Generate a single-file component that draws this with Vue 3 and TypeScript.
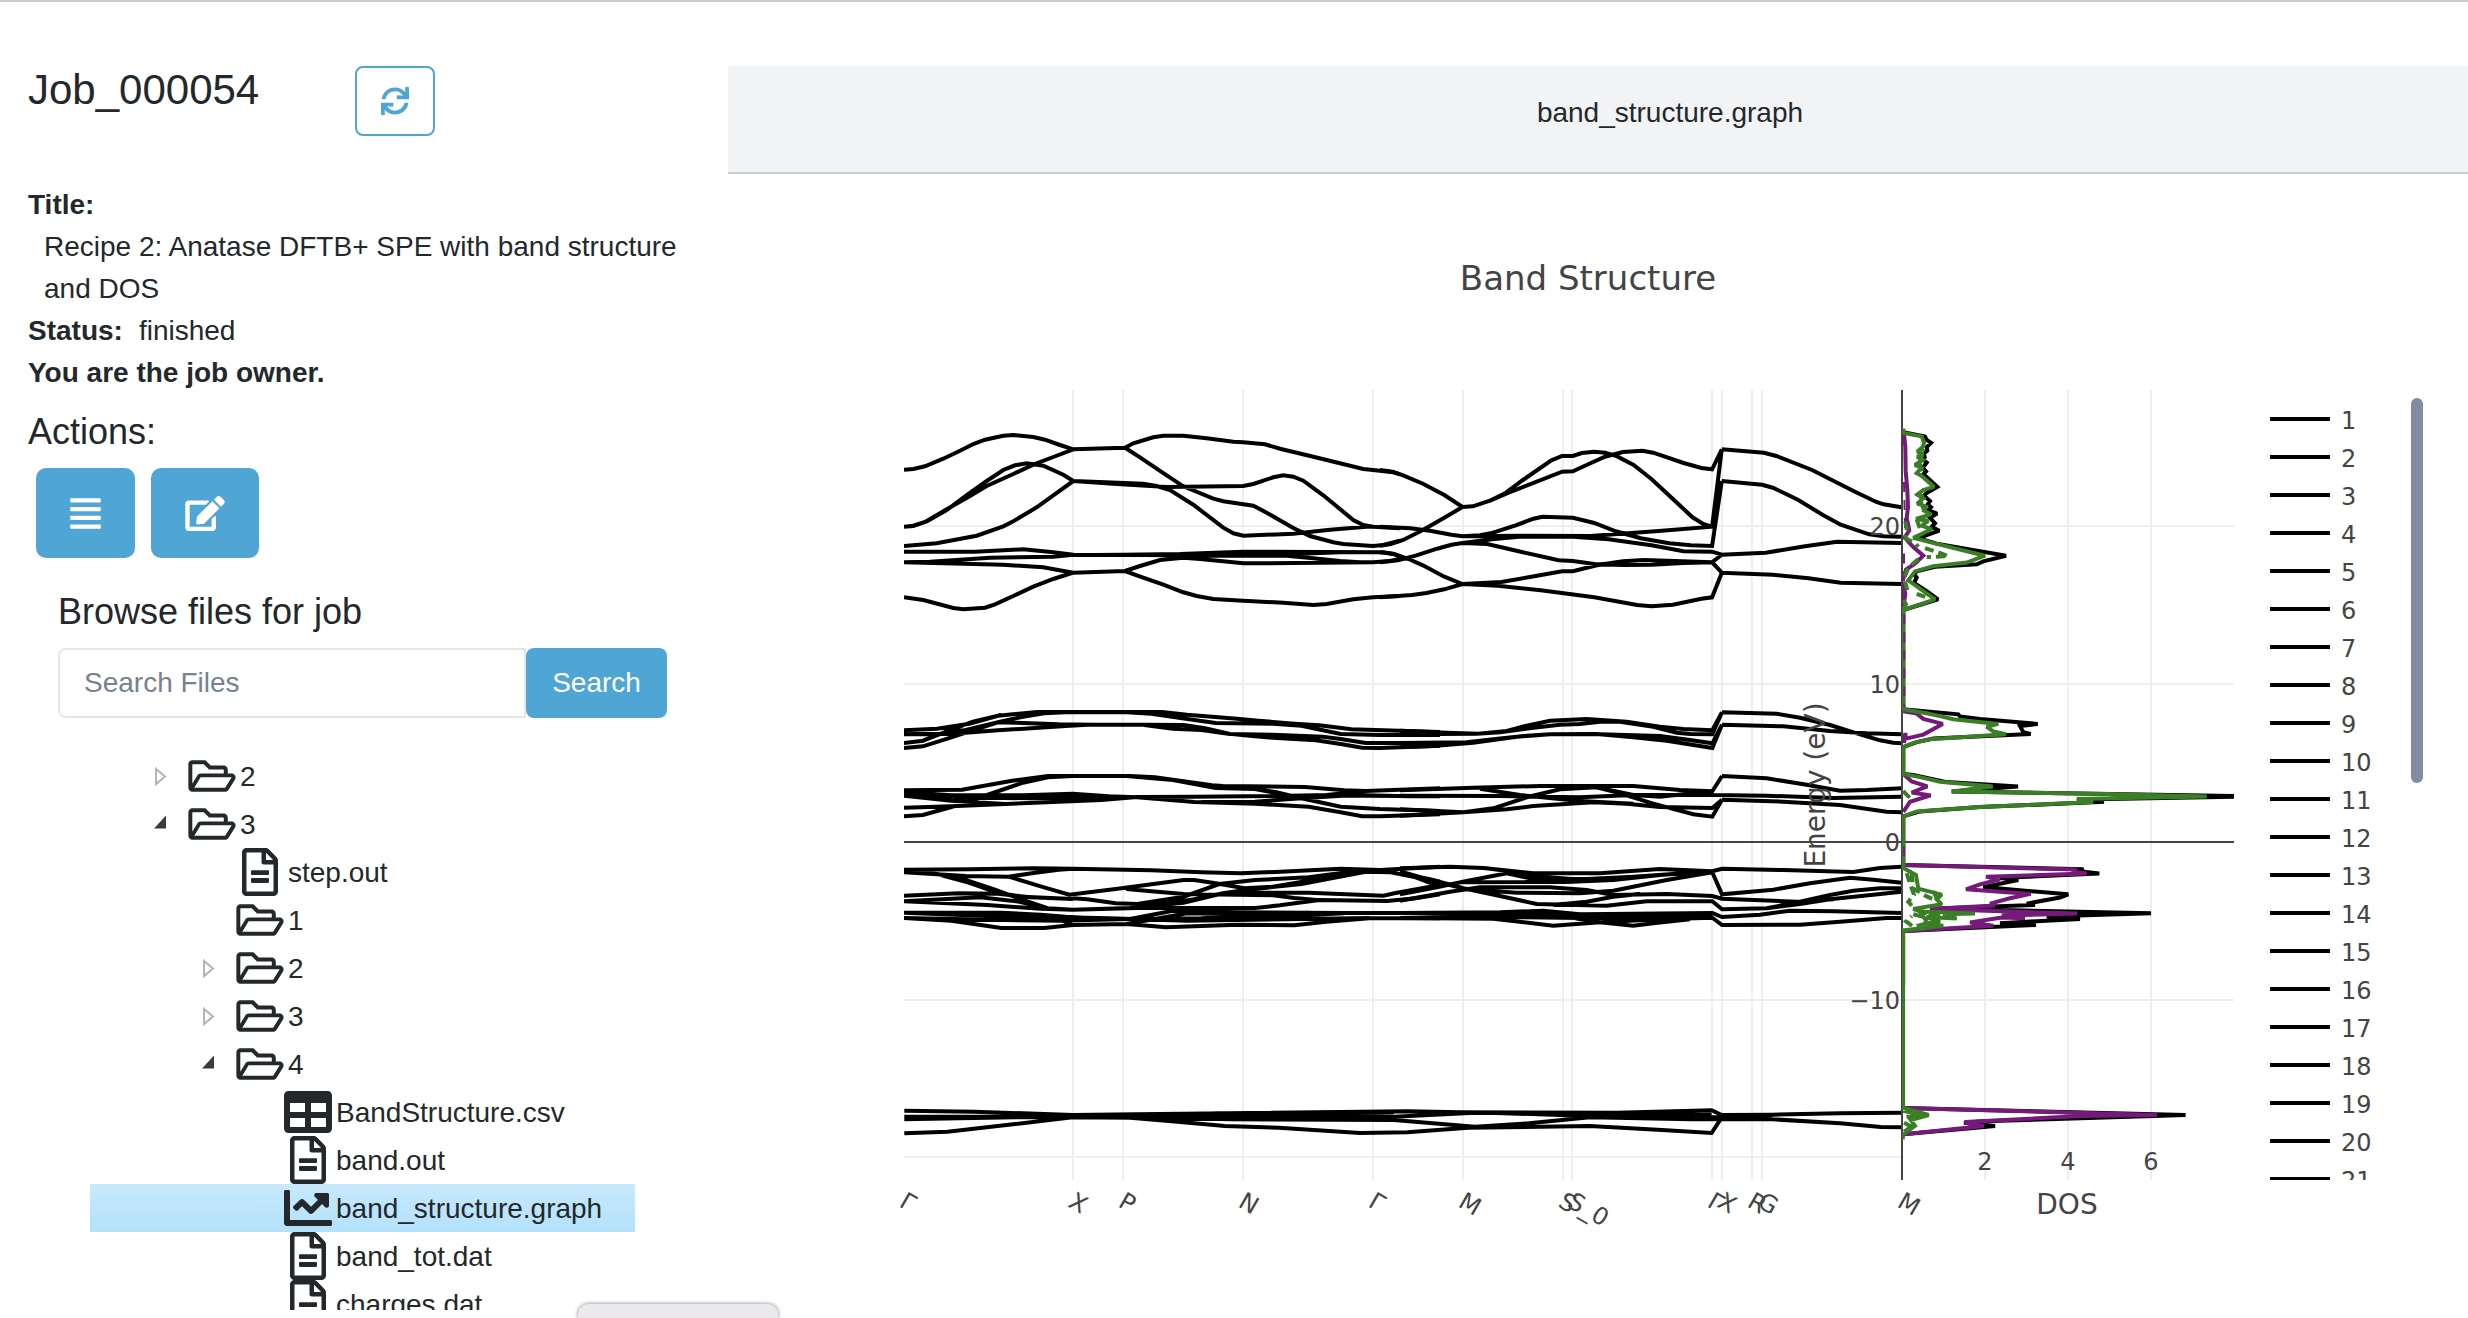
<script setup lang="ts">
import { computed, ref } from 'vue'

type IconName = 'sync' | 'list' | 'edit' | 'folder' | 'file' | 'table' | 'chart'
interface Icon { box: string; d: string }
interface TreeNode { id: number; label: string; level: number; icon: IconName; expander?: 'open' | 'closed' }
interface Tile { x: number; y: number; sx: number; sy: number; lines: string[] }

const icons: Record<IconName, Icon> = {
  sync: { box: '0 0 512 512', d: 'M440.65 12.57l4 82.77A247.16 247.16 0 0 0 255.83 8C134.73 8 33.91 94.92 12.29 209.82A12 12 0 0 0 24.09 224h49.05a12 12 0 0 0 11.67-9.26 175.91 175.91 0 0 1 317-56.94l-101.46-4.86a12 12 0 0 0-12.57 12v47.41a12 12 0 0 0 12 12H500a12 12 0 0 0 12-12V12a12 12 0 0 0-12-12h-47.37a12 12 0 0 0-11.98 12.57zM255.83 432a175.61 175.61 0 0 1-146-77.8l101.8 4.87a12 12 0 0 0 12.57-12v-47.4a12 12 0 0 0-12-12H12a12 12 0 0 0-12 12V500a12 12 0 0 0 12 12h47.35a12 12 0 0 0 12-12.6l-4.15-82.57A247.17 247.17 0 0 0 255.83 504c121.11 0 221.93-86.92 243.55-201.82a12 12 0 0 0-11.8-14.18h-49.05a12 12 0 0 0-11.67 9.26A175.86 175.86 0 0 1 255.83 432z' },
  list: { box: '0 0 448 512', d: 'M432 416H16a16 16 0 0 0-16 16v32a16 16 0 0 0 16 16h416a16 16 0 0 0 16-16v-32a16 16 0 0 0-16-16zm0-128H16a16 16 0 0 0-16 16v32a16 16 0 0 0 16 16h416a16 16 0 0 0 16-16v-32a16 16 0 0 0-16-16zm0-128H16a16 16 0 0 0-16 16v32a16 16 0 0 0 16 16h416a16 16 0 0 0 16-16v-32a16 16 0 0 0-16-16zm0-128H16A16 16 0 0 0 0 48v32a16 16 0 0 0 16 16h416a16 16 0 0 0 16-16V48a16 16 0 0 0-16-16z' },
  edit: { box: '0 0 576 512', d: 'M402.6 83.2l90.2 90.2c3.8 3.8 3.8 10 0 13.8L274.4 405.6l-92.8 10.3c-12.4 1.4-22.9-9.1-21.5-21.5l10.3-92.8L388.8 83.2c3.8-3.8 10-3.8 13.8 0zm162-22.9l-48.8-48.8c-15.2-15.2-39.9-15.2-55.2 0l-35.4 35.4c-3.8 3.8-3.8 10 0 13.8l90.2 90.2c3.8 3.8 10 3.8 13.8 0l35.4-35.4c15.2-15.3 15.2-40 0-55.2zM384 346.2V448H64V128h229.8c3.2 0 6.2-1.3 8.5-3.5l40-40c7.6-7.6 2.2-20.5-8.5-20.5H48C21.5 64 0 85.5 0 112v352c0 26.5 21.5 48 48 48h352c26.5 0 48-21.5 48-48V306.2c0-10.7-12.9-16-20.5-8.5l-40 40c-2.2 2.3-3.5 5.3-3.5 8.5z' },
  folder: { box: '0 0 576 512', d: 'M527.9 224H480v-48c0-26.5-21.5-48-48-48H272l-64-64H48C21.5 64 0 85.5 0 112v288c0 26.5 21.5 48 48 48h400c16.5 0 31.9-8.5 40.7-22.6l79.9-128c20-31.9-3-73.4-40.7-73.4zM48 118c0-3.3 2.7-6 6-6h134.1l64 64H426c3.3 0 6 2.7 6 6v42H152c-16.8 0-32.4 8.8-41.1 23.2L48 351.4zm400 282H72l77.2-128H528z' },
  file: { box: '0 0 384 512', d: 'M288 248v28c0 6.6-5.4 12-12 12H108c-6.6 0-12-5.4-12-12v-28c0-6.6 5.4-12 12-12h168c6.6 0 12 5.4 12 12zm-12 72H108c-6.6 0-12 5.4-12 12v28c0 6.6 5.4 12 12 12h168c6.6 0 12-5.4 12-12v-28c0-6.6-5.4-12-12-12zm108-188.1V464c0 26.5-21.5 48-48 48H48c-26.5 0-48-21.5-48-48V48C0 21.5 21.5 0 48 0h204.1C264.8 0 277 5.1 286 14.1L369.9 98c9 8.9 14.1 21.2 14.1 33.9zm-128-80V128h76.1L256 51.9zM336 464V176H232c-13.3 0-24-10.7-24-24V48H48v416h288z' },
  table: { box: '0 0 512 512', d: 'M464 32H48C21.49 32 0 53.49 0 80v352c0 26.51 21.49 48 48 48h416c26.51 0 48-21.49 48-48V80c0-26.51-21.49-48-48-48zM224 416H64v-96h160v96zm0-160H64v-96h160v96zm224 160H288v-96h160v96zm0-160H288v-96h160v96z' },
  chart: { box: '0 0 512 512', d: 'M496 384H64V80c0-8.84-7.16-16-16-16H16C7.16 64 0 71.16 0 80v336c0 17.67 14.33 32 32 32h464c8.84 0 16-7.16 16-16v-32c0-8.84-7.16-16-16-16zM464 96H345.94c-21.38 0-32.09 25.85-16.97 40.97l32.4 32.4L288 242.75l-73.37-73.37c-12.5-12.5-32.76-12.5-45.25 0l-68.69 68.69c-6.25 6.25-6.25 16.38 0 22.63l22.62 22.62c6.25 6.25 16.38 6.25 22.63 0L192 237.25l73.37 73.37c12.5 12.5 32.76 12.5 45.25 0l96-96 32.4 32.4c15.12 15.12 40.97 4.41 40.97-16.97V112c.01-8.84-7.15-16-15.99-16z' }
}

const nodes: TreeNode[] = [
  { id: 1, label: '2', level: 1, icon: 'folder', expander: 'closed' },
  { id: 2, label: '3', level: 1, icon: 'folder', expander: 'open' },
  { id: 3, label: 'step.out', level: 2, icon: 'file' },
  { id: 4, label: '1', level: 2, icon: 'folder' },
  { id: 5, label: '2', level: 2, icon: 'folder', expander: 'closed' },
  { id: 6, label: '3', level: 2, icon: 'folder', expander: 'closed' },
  { id: 7, label: '4', level: 2, icon: 'folder', expander: 'open' },
  { id: 8, label: 'BandStructure.csv', level: 3, icon: 'table' },
  { id: 9, label: 'band.out', level: 3, icon: 'file' },
  { id: 10, label: 'band_structure.graph', level: 3, icon: 'chart' },
  { id: 11, label: 'band_tot.dat', level: 3, icon: 'file' },
  { id: 12, label: 'charges.dat', level: 3, icon: 'file' }
]
const selected = ref(10)
const query = ref('')
const selectedName = computed(() => nodes.find(n => n.id === selected.value)?.label ?? '')

const symmetryPoints = [
  { x: 904, label: 'Γ' }, { x: 1073, label: 'X' }, { x: 1123, label: 'P' }, { x: 1243, label: 'N' },
  { x: 1373, label: 'Γ' }, { x: 1463, label: 'M' }, { x: 1563, label: 'S' }, { x: 1572, label: 'S_0' },
  { x: 1712, label: 'Γ' }, { x: 1722, label: 'X' }, { x: 1752, label: 'R' }, { x: 1762, label: 'G' },
  { x: 1902, label: 'M' }
]
const gridX = symmetryPoints.slice(1, -1).map(p => p.x)
const energyTicks = [
  { y: 526, label: '20' }, { y: 684, label: '10' }, { y: 842, label: '0' }, { y: 1000, label: '−10' }
]
const dosTicks = [{ x: 1985, label: '2' }, { x: 2068, label: '4' }, { x: 2151, label: '6' }]
const legend = Array.from({ length: 21 }, (_, i) => ({ label: String(i + 1), y: 419 + i * 38 }))

// Each tile holds sampled curves relative to its own origin, in sub-pixel units.
function toPath(t: Tile): string {
  return t.lines.map(line => 'M' + line.split(' ').map(p => {
    const [x, y] = p.split(',').map(Number)
    return (t.x + x / t.sx).toFixed(1) + ' ' + (t.y + y / t.sy).toFixed(1)
  }).join('L')).join('')
}

const bandTiles: Tile[] = [
  { x: 880, y: 380, sx: 3, sy: 3, lines: [
    '72,269 100,267 135,259 190,236 240,212 280,192 315,179 370,167 400,165 460,171 495,179 540,195 580,208 735,203 760,190 820,172 850,167 910,167 980,175 1060,185 1090,187 1155,193 1200,206 1300,230 1450,267 1479,270 1540,277 1560,283',
    '72,440 100,437 135,426 200,388 270,348 320,318 400,282 460,254 520,231 580,208',
    '72,440 100,438 140,424 200,390 260,345 320,303 370,270 405,256 440,250 490,257 550,284 580,303 790,311 830,318 870,330 940,374 1030,443 1060,460 1090,467 1240,461 1350,449 1460,440 1479,440 1560,445',
    '580,303 700,311 860,321 1090,318 1120,312 1180,292 1210,286 1240,290 1270,302 1330,346 1420,420 1450,435 1479,440',
    '72,498 170,490 290,467 370,439 400,424 470,382 520,346 580,303',
    '735,203 780,232 860,286 910,319 1000,356 1030,364 1120,377 1160,398 1240,444 1290,468 1360,487 1390,492 1479,498 1510,495 1560,482',
    '72,515 285,515 430,508 520,517 580,524 640,525 730,524 900,522 1090,515 1510,517 1540,522 1560,530',
    '72,547 150,545 330,533 520,530 580,524',
    '72,547 370,554 490,562 530,569 580,578 735,573 780,558 840,540 910,533 960,537 1090,550 1240,549 1479,547 1530,543 1560,537',
    '72,652 130,660 220,684 250,688 315,683 345,673 400,648 460,620 520,597 580,578',
    '735,573 770,586 850,614 910,637 950,648 1000,657 1090,662 1210,668 1300,675 1340,672 1420,658 1479,652 1560,648',
    '730,524 1000,527 1220,527 1300,535 1380,543 1440,547 1479,547',
    '740,524 950,526 1240,522 1380,517'
  ] },
  { x: 1380, y: 380, sx: 2.8, sy: 3, lines: [
    '0,270 35,275 65,286 120,311 180,345 231,381 260,379 310,361 350,340 400,300 480,241 510,228 540,228 565,219 600,215 630,218 660,227 710,255 760,297 820,357 875,412 905,432 930,440 957,208',
    '310,361 360,338 510,275 540,274 580,254 630,230 680,216 735,212 765,218 850,249 900,264 930,268 957,208',
    '0,440 85,445 140,452 200,464 231,469 280,466 310,460 380,436 430,416 455,410 540,413 600,429 660,454 730,475 810,490 870,496 930,498 957,303',
    '0,497 30,492 65,480 120,450 180,413 231,381',
    '231,469 390,467 590,468 780,453 930,440 957,303',
    '231,489 320,477 390,470 540,470 640,478 760,496 850,514 930,515 957,524',
    '0,517 40,522 80,537 120,556 180,590 231,612',
    '0,547 50,541 100,527 160,506 200,494 231,489',
    '0,652 90,645 130,639 180,628 231,612 340,606 420,591 510,574 540,574 610,555 680,544 740,540 930,547',
    '231,489 300,492 340,502 400,517 500,541 540,543 600,552 680,555 760,554 850,549 930,547 957,578',
    '231,612 330,617 450,631 600,652 720,675 760,679 820,674 900,656 930,652 957,578 1100,584 1200,595 1290,608 1460,612',
    '957,208 1075,218 1110,228 1210,270 1330,335 1390,366 1410,373 1460,382',
    '957,303 1070,314 1100,323 1170,359 1240,405 1290,434 1370,463 1410,469 1460,470',
    '930,547 957,524 1080,518 1190,499 1280,485 1460,489'
  ] },
  { x: 880, y: 680, sx: 2.8, sy: 3, lines: [
    '67,151 160,146 250,131 330,107 440,96 560,96 790,96 860,104 1000,116 1060,122 1160,131 1230,136 1320,148 1568,156',
    '67,163 150,163 240,150 330,127 380,128 500,133 600,134',
    '67,189 120,182 180,157 260,125 340,105',
    '67,204 120,199 180,179 260,151 330,127 400,110 460,100 520,97 690,97 760,101 880,120 940,129 1100,131 1180,137 1290,162 1400,165 1568,165',
    '67,163 240,158 330,151 520,138 580,134 740,134 850,135 910,145 980,162 1100,164 1240,170 1290,177 1360,189 1568,189',
    '740,135 820,146 900,150 980,162 1100,173 1220,181 1290,192 1350,203 1400,204 1568,197',
    '67,331 230,329 370,302 470,288 700,288 770,292 930,316 960,318 1190,321 1300,331 1360,333 1568,325',
    '67,347 200,362 350,372 620,360 720,351 880,350 1180,347 1360,347 1568,349',
    '67,336 200,346 400,346 540,341 640,349 720,352',
    '67,340 220,352 420,355 620,352',
    '67,383 200,379 350,372 620,360',
    '67,409 120,405 180,387 230,372 300,345 400,308 470,292 540,288 690,288 820,300 940,324 1050,327 1110,337 1180,355 1290,380 1400,387 1568,393',
    '720,352 880,366 1050,371 1200,380 1290,397 1350,409 1400,409 1568,403',
    '900,366 1050,365 1200,353 1330,345 1480,349',
    '1050,327 1150,347 1250,345 1360,333',
    '67,569 250,568 430,565 540,566 760,571 900,577 1010,580 1150,574 1290,566 1400,570 1568,560',
    '67,577 160,582 240,605 330,638 400,650 540,657',
    '160,582 240,600 320,628 400,660 480,688',
    '67,577 240,588 360,590 430,579 500,569 540,566',
    '360,590 450,619 530,644 660,627 850,600 880,600 940,610 1020,625 1100,620 1200,602 1340,576',
    '540,655 580,658 660,670 720,672 850,650 950,612 1050,600 1200,592 1340,572',
    '67,647 220,640 330,641 420,652 540,657',
    '67,664 280,652 390,665 470,685 540,689 720,684 880,658 960,640 1060,638 1200,638 1410,647 1440,640 1568,615',
    '67,664 300,675 450,686 540,689 700,684 1050,684 1120,676 1230,660 1420,663 1500,655 1568,643',
    '690,627 760,634 850,642 1100,646 1160,654 1230,661',
    '700,684 850,668 960,640 1040,628 1180,612 1360,575 1430,577 1568,605',
    '1340,572 1400,570 1500,592 1568,620',
    '67,698 340,698 450,704 520,710 640,717 700,717 820,692 1000,697 1300,699 1568,699',
    '67,714 200,722 340,744 460,744 540,735 690,732 760,738 800,742 1000,734 1160,736 1250,725 1370,715 1568,715',
    '67,714 350,720 510,722 540,735',
    '67,698 300,708 510,712 640,715 860,722 1100,710 1300,700',
    '690,732 860,700 1000,703 1200,699',
    '300,708 500,722 700,717 900,715 1100,705 1200,698',
    '860,722 1000,720 1370,714'
  ] },
  { x: 1400, y: 680, sx: 3, sy: 3, lines: [
    '0,152 140,158 235,161 320,153 380,137 450,122 560,117 680,125 780,140 850,147 937,151 966,97',
    '0,163 230,161 300,157 400,143 480,134 540,132 600,125 660,125 760,140 830,158 870,162 937,163 966,97',
    '0,189 200,187 280,178 380,167 450,163 600,163 780,168 870,180 937,190 966,134',
    '0,201 100,198 220,188 350,170 450,163 590,162 700,172 800,182 937,204 966,134',
    '966,97 1130,101 1200,113 1290,135 1380,163 1440,181 1480,188 1505,190',
    '966,134 1150,139 1290,153 1400,160 1505,163',
    '0,331 220,323 420,318 700,318 840,330 937,334 966,288',
    '0,347 300,348 540,352 700,345 937,345 1100,347 1300,354 1505,350',
    '0,388 190,397 280,385 380,352 480,328 590,322 660,340 760,371 880,403 937,410 966,359',
    '0,407 190,397 320,388 400,378 580,367 680,371 780,381 937,384 966,359',
    '240,326 360,345 540,363 700,371',
    '580,320 700,345 780,350 937,333',
    '966,288 1100,295 1220,314 1320,332 1400,330 1505,325',
    '966,359 1150,365 1320,375 1460,395 1505,397',
    '0,565 150,560 250,564 400,580 600,580 780,567 937,574 966,566 1150,570 1360,576 1440,564 1505,560',
    '0,580 90,598 190,625 300,648 410,672 620,677 740,664 937,664 966,688 1100,685 1200,665 1290,645 1360,632 1440,625 1505,625',
    '0,574 110,605 200,628 350,638 540,640',
    '0,643 110,622 200,603 320,580 400,597 560,597 700,590 937,574',
    '0,662 150,635 240,622 450,622 560,630 640,645 800,642 937,648 966,656 1190,665 1300,658',
    '180,607 500,606 640,600 780,585 937,574',
    '540,640 640,632 800,600 937,577',
    '260,565 360,578 420,590 560,600',
    '460,675 560,665 640,650 720,642',
    '937,577 966,643 1120,629 1230,610 1350,593 1420,599 1505,608',
    '1100,685 1200,672 1290,658 1505,635',
    '0,699 300,697 430,692 540,703 937,699 966,711 1080,704 1170,692 1300,694 1505,699',
    '0,714 280,716 460,737 600,727 780,718 937,713 966,735 1200,734 1320,725 1460,714 1505,714',
    '430,692 540,718 600,727 700,737 760,730 870,718',
    '0,714 280,710 540,714 800,714',
    '0,699 430,703 700,710 937,708'
  ] },
  { x: 880, y: 1080, sx: 1.479, sy: 3, lines: [
    '36,92 140,95 285,105 380,103 780,94 860,97 1090,98 1230,91 1245,105 1320,104 1420,100 1510,98',
    '36,110 350,110 500,100 760,97',
    '36,118 200,112 345,110 520,118 760,120 880,140 960,130 1050,112 1200,118 1320,118 1420,130 1480,141 1510,142',
    '36,160 100,155 200,132 285,112 370,113 440,125 510,138 590,143 710,159 780,157 870,143 1050,138 1150,149 1230,159 1245,112',
    '345,110 540,104 760,110 880,98 1050,100 1230,104',
    '900,98 1050,108 1245,112 1320,106',
    '36,112 350,112 760,114'
  ] }
]
const bandPaths = bandTiles.map(toPath)

const upper = { x: 1780, y: 400, sx: 3, sy: 2.8 }
const lower = { x: 1800, y: 980, sx: 2.347, sy: 3 }

const dosTotal = toPath({ ...upper, lines: [
  '370,90 435,102 440,112 453,120 440,132 442,142 432,150 434,160 428,166 440,175 428,190 438,200 430,208 440,216 472,243 440,260 432,268 450,283 443,292 453,300 445,308 471,318 450,330 465,345 455,355 478,366 415,387 470,402 678,436 610,452 590,460 465,467 410,480 402,488 410,497 402,512 440,535 474,558 370,588 370,866 535,880 540,886 600,893 773,907 720,913 730,930 752,935 460,948 410,958 370,972 370,1047 400,1050 500,1070 714,1082 515,1096 1362,1109',
  '1362,1111 900,1119 972,1125 600,1140 420,1152 370,1166 370,1302 910,1314 905,1320 958,1326 660,1338 715,1344 610,1364 865,1384 840,1393 740,1410 765,1414 470,1424 1113,1437 800,1446 900,1453 660,1465 768,1470 372,1487'
] }) + toPath({ ...lower, lines: ['240,384 905,405 430,424 385,428 458,438 243,463'] })

const dosP = toPath({ ...upper, lines: [
  '372,95 376,130 377,200 382,250 384,300 380,330 388,365 374,385 400,412 430,436 405,458 378,475 370,500',
  '370,510 376,545 370,580',
  '370,872 410,878 430,893 488,907 430,937 378,948 376,932 372,960',
  '370,1047 395,1068 442,1082 395,1099 452,1107 390,1125 370,1153',
  '372,1302 890,1315 875,1320 920,1326 618,1335 660,1342 600,1356 558,1370 752,1383 690,1395 630,1410 645,1415 450,1425 892,1438 665,1443 735,1451 665,1449 570,1463 640,1472 372,1487'
] }) + toPath({ ...lower, lines: ['240,384 838,405 660,408 387,426 400,432 432,438 243,463'] })

const dosD = toPath({ ...upper, lines: [
  '370,80 370,92 425,102 432,120 428,132 412,145 430,150 412,160 428,168 405,182 424,190 410,205 424,212 462,243 430,252 412,265 430,275 412,290 438,298 432,310 452,320 408,333 445,338 425,352 455,362 400,386 470,403 615,436 560,455 460,465 405,480 385,505 465,558 370,588 370,866 440,877 480,885 520,894 655,907 620,915 640,928 678,936 450,950 400,960 370,972 370,1047 420,1056 480,1069 638,1082 515,1096 980,1103 1280,1110 890,1117 940,1126 600,1140 410,1152 370,1166 370,1300',
  '432,135 418,142 426,155 418,175 426,200',
  '426,262 422,285 432,308',
  '370,1300 370,1310 408,1330 415,1368 485,1385 470,1398 485,1412 400,1425 420,1432 585,1438 490,1440 530,1452 440,1448 480,1462 430,1466 490,1472 370,1485 370,1640'
] }) + toPath({ ...lower, lines: [
  '242,0 242,384 302,405 260,420 270,437 242,463 241,478',
  '242,392 285,404 250,410',
  '244,428 262,440 244,455'
] })

const dosDashed = toPath({ ...upper, lines: [
  '372,385 405,400 415,412',
  '435,415 485,430 505,437 440,440',
  '415,445 385,470 372,500 385,540',
  '410,543 450,556',
  '376,340 380,360 376,385',
  '410,335 420,360',
  '370,560 378,572 370,585',
  '370,1095 385,1110 370,1122',
  '380,1325 392,1360 402,1385 385,1405 405,1425',
  '395,1325 400,1368 440,1390 460,1398',
  '460,1375 475,1405',
  '400,1440 440,1450 460,1438 415,1430 445,1465 400,1475 378,1460 395,1445',
  '480,1440 420,1436 430,1448'
] })
const dosMinorP = toPath({ ...upper, lines: ['372,230 376,385', '372,430 372,580', '373,600 373,860', '372,1250 372,1300'] })
</script>

<template>
  <div class="page">
    <aside class="sidebar">
      <header class="job-head">
        <h1>Job_000054</h1>
        <button class="refresh" type="button" aria-label="Refresh job">
          <svg class="ic ic-sync" :viewBox="icons.sync.box"><path :d="icons.sync.d" /></svg>
        </button>
      </header>

      <dl class="meta">
        <dt>Title:</dt>
        <dd class="title">Recipe 2: Anatase DFTB+ SPE with band structure and DOS</dd>
        <div class="status"><dt>Status:</dt><dd>finished</dd></div>
      </dl>
      <p class="owner">You are the job owner.</p>

      <h2>Actions:</h2>
      <div class="actions">
        <button type="button" aria-label="Show details">
          <svg class="ic ic-list" :viewBox="icons.list.box"><path :d="icons.list.d" /></svg>
        </button>
        <button type="button" aria-label="Edit job">
          <svg class="ic ic-edit" :viewBox="icons.edit.box"><path :d="icons.edit.d" /></svg>
        </button>
      </div>

      <section class="browser">
        <h2>Browse files for job</h2>
        <form class="search" @submit.prevent>
          <input v-model="query" type="text" placeholder="Search Files" aria-label="Search Files" />
          <button type="submit">Search</button>
        </form>
        <ul class="tree" role="tree">
          <li
            v-for="n in nodes"
            :key="n.id"
            role="treeitem"
            :class="['level-' + n.level, { selected: n.id === selected }]"
            @click="selected = n.id"
          >
            <span class="expander">
              <svg v-if="n.expander === 'closed'" viewBox="0 0 48 48">
                <path d="M16 17v15l9-7.500z" fill="#fff" stroke="#b4b4b4" stroke-width="2" />
              </svg>
              <svg v-else-if="n.expander === 'open'" viewBox="0 0 48 48">
                <path d="M26 15.500v13H14z" fill="#3b3b3f" />
              </svg>
            </span>
            <span class="glyph">
              <svg :class="['ic', 'ic-' + n.icon]" :viewBox="icons[n.icon].box"><path :d="icons[n.icon].d" /></svg>
            </span>
            <span class="label">{{ n.label }}</span>
          </li>
        </ul>
      </section>
    </aside>

    <main class="viewer">
      <header class="viewer-head">{{ selectedName }}</header>
      <svg class="chart" viewBox="728 174 1740 1144" role="img" aria-label="Band Structure">
        <defs>
          <clipPath id="band-area"><rect x="904" y="390" width="998" height="790" /></clipPath>
          <clipPath id="dos-area"><rect x="1902" y="390" width="332" height="790" /></clipPath>
          <clipPath id="legend-area"><rect x="2260" y="390" width="140" height="790" /></clipPath>
        </defs>

        <text class="chart-title" x="1588" y="290" text-anchor="middle">Band Structure</text>

        <g class="grid">
          <line v-for="x in gridX" :key="x" :x1="x" :x2="x" y1="390" y2="1180" />
          <line v-for="t in dosTicks" :key="t.x" :x1="t.x" :x2="t.x" y1="390" y2="1180" />
          <line x1="904" x2="2234" y1="526" y2="526" />
          <line x1="904" x2="2234" y1="684" y2="684" />
          <line x1="904" x2="2234" y1="1000" y2="1000" />
          <line x1="904" x2="1902" y1="1157" y2="1157" />
        </g>
        <line class="zero" x1="904" x2="2234" y1="842" y2="842" />

        <g class="trace" clip-path="url(#band-area)">
          <path v-for="(d, i) in bandPaths" :key="i" :d="d" />
        </g>
        <line class="zero" x1="1902" x2="1902" y1="390" y2="1180" />
        <g class="trace" clip-path="url(#dos-area)">
          <path :d="dosTotal" />
          <path class="p" :d="dosP" />
          <path class="d" :d="dosD" />
          <path class="p thin" :d="dosMinorP" />
          <path class="d dashed" :d="dosDashed" />
        </g>

        <g class="ticks">
          <text v-for="t in energyTicks" :key="t.label" x="1900" :y="t.y + 9" text-anchor="end">{{ t.label }}</text>
          <text v-for="t in dosTicks" :key="t.label" :x="t.x" y="1170" text-anchor="middle">{{ t.label }}</text>
          <text
            v-for="(p, i) in symmetryPoints"
            :key="i"
            :transform="`translate(${p.x - 6} 1206) rotate(30)`"
          >{{ p.label }}</text>
        </g>
        <text class="axis-title" transform="translate(1825 785) rotate(-90)" text-anchor="middle">Energy (eV)</text>
        <text class="axis-title" x="2067" y="1214" text-anchor="middle">DOS</text>

        <g class="legend" clip-path="url(#legend-area)">
          <g v-for="l in legend" :key="l.label">
            <line x1="2270" x2="2330" :y1="l.y" :y2="l.y" />
            <text x="2341" :y="l.y + 10">{{ l.label }}</text>
          </g>
        </g>
        <rect x="2411" y="398" width="12" height="385" rx="6" fill="#808ba4" />
      </svg>
    </main>
    <div class="status-bubble"></div>
  </div>
</template>

<style>
body {
  margin: 0;
  background: #fff;
}
</style>

<style scoped>
.page {
  position: relative;
  display: flex;
  box-sizing: border-box;
  height: 100vh;
  overflow: hidden;
  border-top: 2px solid #c8ced3;
  background: #fff;
  color: #23282c;
  font: 28px/42px "Liberation Sans", Arial, sans-serif;
}
.sidebar {
  display: flex;
  flex-direction: column;
  flex: 0 0 728px;
  box-sizing: border-box;
  padding: 64px 28px 8px;
}
h1, h2, p, dl, dd, ul { margin: 0; padding: 0; }
h1 { font-size: 42px; line-height: 48px; font-weight: 400; }
h2 { font-size: 36px; line-height: 44px; font-weight: 400; }
button { font: inherit; cursor: pointer; }
.ic { display: block; fill: currentColor; }
.ic-sync { width: 28px; height: 28px; }
.ic-list { width: 31px; height: 35px; }
.ic-edit { width: 40px; height: 35px; }
.ic-folder { width: 48px; height: 42px; }
.ic-file { width: 36px; height: 48px; }
.ic-table, .ic-chart { width: 48px; height: 48px; }

.job-head { display: flex; align-items: flex-start; gap: 96px; }
.refresh {
  display: flex;
  align-items: center;
  justify-content: center;
  width: 80px;
  height: 70px;
  padding: 0;
  border: 2px solid #4fa5d4;
  border-radius: 8px;
  background: #fff;
  color: #4fa5d4;
}
.meta { margin-top: 48px; }
dt, .owner { font-weight: 700; }
.title { padding-left: 16px; }
.status { display: flex; gap: 16px; }
.sidebar > h2 { margin: 16px 0 14px; }
.actions { display: flex; gap: 16px; padding-left: 8px; }
.actions button {
  display: flex;
  align-items: center;
  height: 90px;
  padding: 0 34px;
  border: 0;
  border-radius: 10px;
  background: #4fa5d4;
  color: #fff;
}
.browser {
  display: flex;
  flex-direction: column;
  flex: 1;
  min-height: 0;
  padding: 32px 33px 0 30px;
}
.search { display: flex; margin-top: 14px; }
.search input {
  flex: 1;
  min-width: 0;
  box-sizing: border-box;
  height: 70px;
  padding: 0 24px;
  border: 2px solid #e4e7ea;
  border-radius: 8px 0 0 8px;
  background: #fff;
  color: #5c6873;
  font: inherit;
}
.search input::placeholder { color: #768192; opacity: 1; }
.search button {
  width: 141px;
  padding: 0;
  border: 0;
  border-radius: 8px;
  background: #4fa5d4;
  color: #fff;
}
.tree {
  flex: 1;
  min-height: 0;
  overflow: hidden;
  margin: 34px 32px 0;
  list-style: none;
}
.tree li {
  display: flex;
  align-items: center;
  height: 48px;
  line-height: 48px;
  cursor: default;
}
.tree .level-1 { padding-left: 50px; }
.tree .level-2 { padding-left: 98px; }
.tree .level-3 { padding-left: 146px; }
.tree .selected { background: linear-gradient(#c8e9fd, #b3e1fb); }
.expander, .glyph { display: flex; align-items: center; justify-content: center; flex: 0 0 48px; height: 48px; }
.expander svg { width: 48px; height: 48px; }
.label { padding: 2px 0 0 4px; }

.viewer { flex: 1; min-width: 0; padding-top: 64px; }
.viewer-head {
  box-sizing: border-box;
  height: 108px;
  padding: 26px 0 0 144px;
  border-bottom: 2px solid #c8ced3;
  border-radius: 4px 0 0 0;
  background: #f2f3f5;
  text-align: center;
}
.chart { display: block; width: 100%; font-family: "DejaVu Sans", Verdana, sans-serif; }
.chart text { fill: #444; }
.chart-title { font-size: 34px; }
.axis-title { font-size: 28px; }
.ticks, .legend { font-size: 24px; }
.grid line { stroke: #eee; stroke-width: 2; }
.zero { stroke: #444; stroke-width: 2; }
.legend line { stroke: #000; stroke-width: 4; }
.trace path { fill: none; stroke: #000; stroke-width: 4; stroke-miterlimit: 2; }
.trace .p { stroke: #75197b; }
.trace .d { stroke: #3a7f25; }
.trace .thin { stroke-width: 2; stroke-dasharray: 10 8; }
.trace .dashed { stroke-dasharray: 9 5; }

.status-bubble {
  position: absolute;
  left: 578px;
  bottom: 0;
  width: 200px;
  height: 14px;
  border-radius: 10px 10px 0 0;
  background: #ebe9ee;
  box-shadow: 0 0 4px rgba(0, 0, 0, 0.5);
}
</style>
